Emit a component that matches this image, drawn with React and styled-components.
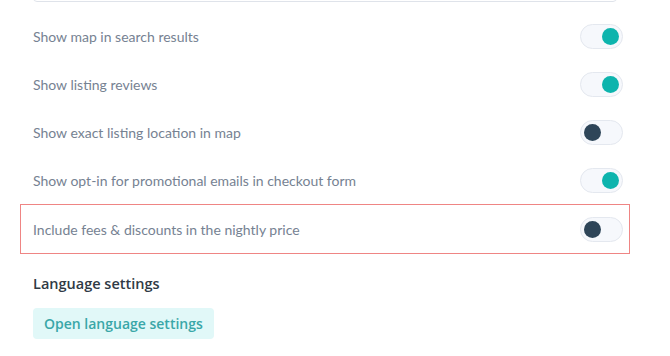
import { useState } from "react";
import styled, { createGlobalStyle } from "styled-components";

const Global = createGlobalStyle`
  body {
    margin: 0;
    background: #ffffff;
    font-family: "Open Sans", "Liberation Sans", sans-serif;
  }
`;

const Page = styled.div`
  width: 670px;
  height: 356px;
  overflow: hidden;
  padding: 0 40px 0 20px;
  box-sizing: border-box;
`;

const InputEdge = styled.div`
  margin: -38px 13px 0;
  height: 40px;
  border: 1px solid #dfe3ea;
  border-radius: 4px;
  box-sizing: border-box;
`;

const List = styled.div`
  display: flex;
  flex-direction: column;
  padding-top: 10px;
`;

const Row = styled.div`
  display: flex;
  align-items: center;
  justify-content: space-between;
  height: ${({ $highlight }) => ($highlight ? "48px" : "46px")};
  padding: 0 6px 0 12px;
  border: 1px solid ${({ $highlight }) => ($highlight ? "#ef8584" : "transparent")};
  box-sizing: content-box;
`;

const Label = styled.span`
  font-family: "Lato", "Liberation Sans", sans-serif;
  font-size: 14px;
  color: #768292;
`;

const Track = styled.button`
  width: 43px;
  height: 25px;
  padding: 0 3px;
  border-radius: 13px;
  border: 1px solid #e4e8ef;
  background: #f6f8fc;
  display: flex;
  align-items: center;
  justify-content: ${({ $on }) => ($on ? "flex-end" : "flex-start")};
  box-sizing: border-box;
  cursor: pointer;
`;

const Knob = styled.span`
  width: 17px;
  height: 17px;
  border-radius: 50%;
  background: ${({ $on }) => ($on ? "#0db4ad" : "#2e4558")};
`;

const Section = styled.div`
  padding: 20px 13px 0;
  display: flex;
  flex-direction: column;
  align-items: flex-start;
  gap: 14px;
`;

const Heading = styled.h3`
  margin: 0;
  font-size: 14.5px;
  line-height: 20px;
  font-weight: 600;
  color: #2f3a45;
`;

const LinkButton = styled.button`
  font-family: "Open Sans", "Liberation Sans", sans-serif;
  font-size: 14px;
  font-weight: 600;
  color: #3aa7a8;
  background: #e1f8f8;
  border: none;
  border-radius: 4px;
  height: 31px;
  padding: 0 11px;
  cursor: pointer;
`;

const Toggle = ({ on, onClick }) => (
  <Track $on={on} onClick={onClick}>
    <Knob $on={on} />
  </Track>
);

const initial = [
  { label: "Show map in search results", on: true },
  { label: "Show listing reviews", on: true },
  { label: "Show exact listing location in map", on: false },
  { label: "Show opt-in for promotional emails in checkout form", on: true },
  { label: "Include fees & discounts in the nightly price", on: false, highlight: true },
];

export default function App() {
  const [items, setItems] = useState(initial);
  const flip = (i) =>
    setItems(items.map((it, j) => (j === i ? { ...it, on: !it.on } : it)));

  return (
    <Page>
      <Global />
      <InputEdge />
      <List>
        {items.map((it, i) => (
          <Row key={it.label} $highlight={it.highlight}>
            <Label>{it.label}</Label>
            <Toggle on={it.on} onClick={() => flip(i)} />
          </Row>
        ))}
      </List>
      <Section>
        <Heading>Language settings</Heading>
        <LinkButton>Open language settings</LinkButton>
      </Section>
    </Page>
  );
}
